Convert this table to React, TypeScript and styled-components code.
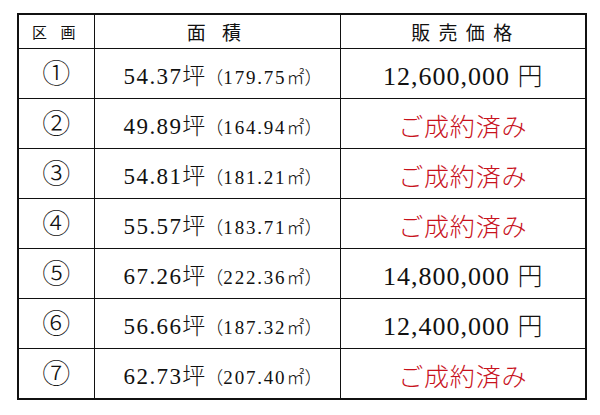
import React from "react";
import styled, { createGlobalStyle } from "styled-components";

const GlobalStyle = createGlobalStyle`
  html, body { margin: 0; padding: 0; background: #ffffff; }
  body { font-family: "Liberation Serif", "Times New Roman", "DejaVu Serif", serif; color: #111; }
`;

const Page = styled.div`
  width: 600px;
  height: 415px;
  padding: 13px 0 0 17px;
  box-sizing: border-box;
  background: #fff;
`;

const Table = styled.table`
  border-collapse: collapse;
  table-layout: fixed;
  width: 569px;
  border: 2px solid #111;
`;

const HeadCell = styled.th<{ $size: number; $spacing: number }>`
  height: 33px;
  padding: 0;
  border: 1.5px solid #111;
  font-family: "Noto Sans CJK JP", sans-serif;
  font-weight: 400;
  font-size: ${(p) => p.$size}px;
  letter-spacing: ${(p) => p.$spacing}px;
  text-align: center;
  vertical-align: middle;
  line-height: 1;
`;

const Cell = styled.td`
  height: 49px;
  padding: 0;
  border: 1.5px solid #111;
  text-align: center;
  vertical-align: middle;
  line-height: 1;
`;

const Circled = styled.span`
  font-family: "DejaVu Serif", "Noto Sans CJK JP", serif;
  font-size: 28px;
  font-weight: 300;
  position: relative;
  top: 1px;
`;

const Num = styled.span<{ $size: number; $spacing: number }>`
  font-family: "Liberation Serif", "Times New Roman", "DejaVu Serif", serif;
  font-size: ${(p) => p.$size}px;
  letter-spacing: ${(p) => p.$spacing}px;
`;

const Kanji = styled.span<{ $size: number }>`
  font-family: "Noto Sans CJK JP", sans-serif;
  font-weight: 300;
  font-size: ${(p) => p.$size}px;
`;

const Area = styled.span`
  position: relative;
  left: 6px;
  top: 2px;
  white-space: nowrap;
`;

const Price = styled.span`
  position: relative;
  top: 2px;
  white-space: nowrap;
`;

const Sold = styled.span`
  font-family: "Noto Sans CJK JP", sans-serif;
  font-weight: 300;
  font-size: 25px;
  color: #c8121c;
  letter-spacing: 0.8px;
  position: relative;
  top: 2px;
`;

type Row = { no: string; tsubo: string; sqm: string; price: string | null };

const rows: Row[] = [
  { no: "①", tsubo: "54.37", sqm: "179.75", price: "12,600,000" },
  { no: "②", tsubo: "49.89", sqm: "164.94", price: null },
  { no: "③", tsubo: "54.81", sqm: "181.21", price: null },
  { no: "④", tsubo: "55.57", sqm: "183.71", price: null },
  { no: "⑤", tsubo: "67.26", sqm: "222.36", price: "14,800,000" },
  { no: "⑥", tsubo: "56.66", sqm: "187.32", price: "12,400,000" },
  { no: "⑦", tsubo: "62.73", sqm: "207.40", price: null },
];

export default function App() {
  return (
    <>
      <GlobalStyle />
      <Page>
        <Table>
          <colgroup>
            <col style={{ width: 76 }} />
            <col style={{ width: 246 }} />
            <col style={{ width: 246 }} />
          </colgroup>
          <thead>
            <tr>
              <HeadCell $size={15} $spacing={5}>区 画</HeadCell>
              <HeadCell $size={19} $spacing={6}>面 積</HeadCell>
              <HeadCell $size={19} $spacing={2}>販 売 価 格</HeadCell>
            </tr>
          </thead>
          <tbody>
            {rows.map((r) => (
              <tr key={r.no}>
                <Cell>
                  <Circled>{r.no}</Circled>
                </Cell>
                <Cell>
                  <Area>
                    <Num $size={23} $spacing={1.4}>{r.tsubo}</Num>
                    <Kanji $size={23}>坪</Kanji>
                    <Kanji $size={18}>（</Kanji>
                    <Num $size={19} $spacing={1.8}>{r.sqm}</Num>
                    <Kanji $size={18}>㎡）</Kanji>
                  </Area>
                </Cell>
                <Cell>
                  {r.price ? (
                    <Price>
                      <Num $size={26} $spacing={1}>{r.price} </Num>
                      <Kanji $size={25}>円</Kanji>
                    </Price>
                  ) : (
                    <Sold>ご成約済み</Sold>
                  )}
                </Cell>
              </tr>
            ))}
          </tbody>
        </Table>
      </Page>
    </>
  );
}
